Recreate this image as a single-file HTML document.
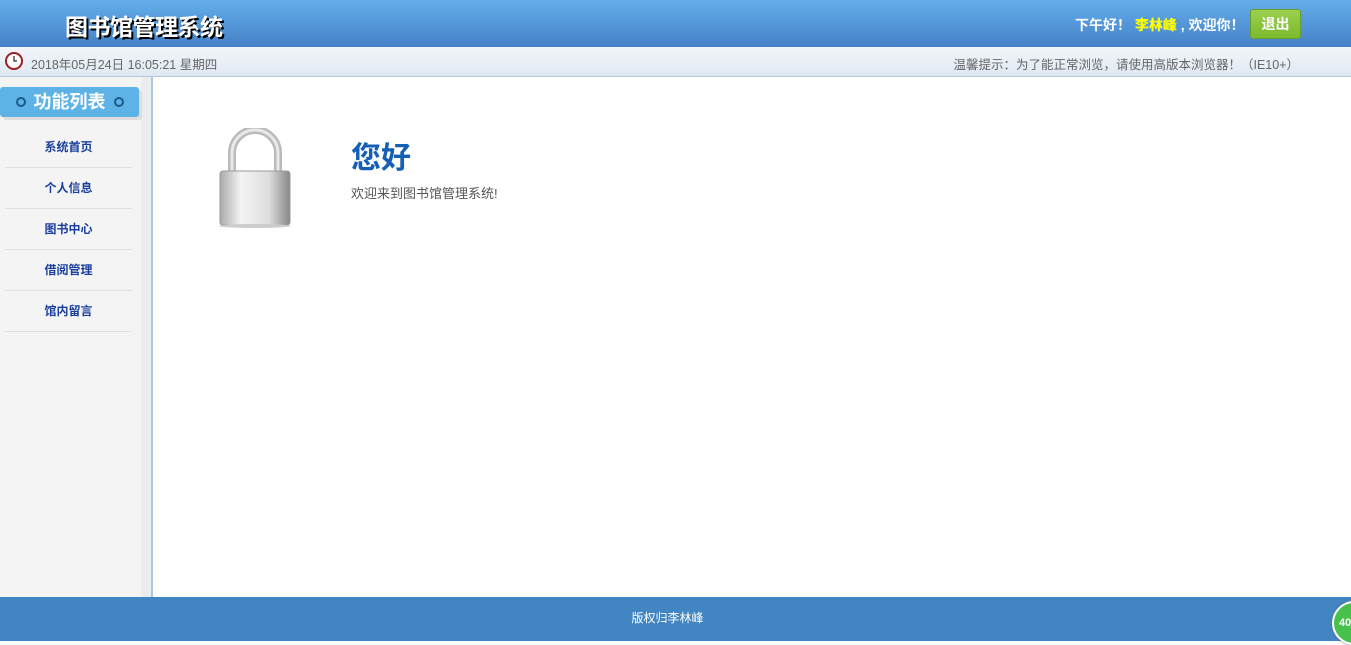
<!DOCTYPE html>
<html><head><meta charset="utf-8"><style>
*{margin:0;padding:0;box-sizing:border-box}
body{width:1351px;height:641px;overflow:hidden;font-family:"Liberation Sans","Noto Sans CJK SC",sans-serif;background:#fff;position:relative}
.hd{position:absolute;left:0;top:0;width:1351px;height:47px;background:linear-gradient(#63aeea,#4681c8)}
.title{position:absolute;left:65px;top:8px;font-size:23px;font-weight:bold;color:#fff;text-shadow:2px 2px 0 #000;letter-spacing:-0.5px}
.hr{position:absolute;top:15px;font-size:14px;font-weight:bold;color:#fff}
.hr b{color:#ff0}
.out{position:absolute;left:1250px;top:9px;width:51px;height:30px;background:linear-gradient(#9ad04e,#7cba2e);border:1px solid #6a9e2c;border-radius:3px;color:#fff;font-weight:bold;font-size:14px;text-align:center;line-height:28px}
.sb{position:absolute;left:0;top:47px;width:1351px;height:30px;background:linear-gradient(#f3f6fa,#dfe8f2);border-bottom:1px solid #b8c8dc;font-size:12.5px;color:#666}
.side{position:absolute;left:0;top:77px;width:153px;height:520px;background:#f4f4f4;border-right:2px solid #a8c8e8}
.side:before{content:"";position:absolute;right:0;top:0;width:10px;height:100%;background:#ececec}
.fl{position:absolute;left:0;top:10px;width:139px;height:30px;background:#5db3e6;border-radius:3px;box-shadow:3px 3px 0 #ddd;color:#fff;font-weight:bold;font-size:18px;line-height:30px;text-align:center;z-index:2}
.dot{display:inline-block;width:10px;height:10px;border-radius:50%;border:2.5px solid #1a5b8a;background:#5db3e6;vertical-align:1px;margin:0 8px}
.m{position:absolute;left:5px;width:127px;height:41px;border-bottom:1px solid #e0e0e0;text-align:center;font-size:12px;font-weight:bold;color:#1a3f9c;line-height:41px;z-index:2}
.ft{position:absolute;left:0;top:597px;width:1336px;height:44px;background:#4185c2;color:#fff;font-size:12px;text-align:center;line-height:42px}
</style></head><body>
<div class="hd"><div class="title">图书馆管理系统</div>
<div class="hr" style="left:1075px">下午好！ <b>李林峰</b> , 欢迎你！</div>
<div class="out">退出</div></div>
<div class="sb">
<svg style="position:absolute;left:5px;top:5px" width="18" height="18" viewBox="0 0 18 18"><circle cx="9" cy="9" r="8" fill="#fff" stroke="#a02020" stroke-width="2"/><path d="M9 4V9H12" stroke="#333" stroke-width="1.3" fill="none"/></svg>
<span style="position:absolute;left:31px;top:7px">2018年05月24日 16:05:21 星期四</span>
<span style="position:absolute;right:52px;top:7px">温馨提示：为了能正常浏览，请使用高版本浏览器！（IE10+）</span></div>
<div class="side"><div class="fl"><span class="dot"></span>功能列表<span class="dot"></span></div>
<div class="m" style="top:50px">系统首页</div><div class="m" style="top:91px">个人信息</div><div class="m" style="top:132px">图书中心</div><div class="m" style="top:173px">借阅管理</div><div class="m" style="top:214px">馆内留言</div></div>
<svg style="position:absolute;left:215px;top:128px" width="80" height="100" viewBox="0 0 80 100">
<defs><linearGradient id="g" x1="0" x2="1"><stop offset="0" stop-color="#aaa"/><stop offset=".3" stop-color="#f4f4f4"/><stop offset=".7" stop-color="#ddd"/><stop offset="1" stop-color="#888"/></linearGradient></defs>
<path d="M17 45V25a23 23 0 0 1 46 0v20" fill="none" stroke="#bbb" stroke-width="8"/>
<path d="M17 45V25a23 23 0 0 1 46 0v20" fill="none" stroke="#e8e8e8" stroke-width="3"/>
<rect x="5" y="43" width="70" height="54" rx="3" fill="url(#g)" stroke="#999"/>
<ellipse cx="40" cy="98" rx="36" ry="2" fill="#ccc"/></svg>
<div style="position:absolute;left:351px;top:133px;font-size:30px;font-weight:bold;color:#1560b5">您好</div>
<div style="position:absolute;left:351px;top:183px;font-size:13px;color:#555">欢迎来到图书馆管理系统!</div>
<div class="ft" style="width:1351px;text-indent:-16px">版权归李林峰</div>
<div style="position:absolute;left:1332px;top:601px;width:44px;height:44px;border-radius:50%;background:#48c04c;border:2px solid #fff;box-shadow:0 0 2px #666;color:#fff;font-size:11px;font-weight:bold;line-height:40px;padding-left:5px">40</div>
</body></html>
